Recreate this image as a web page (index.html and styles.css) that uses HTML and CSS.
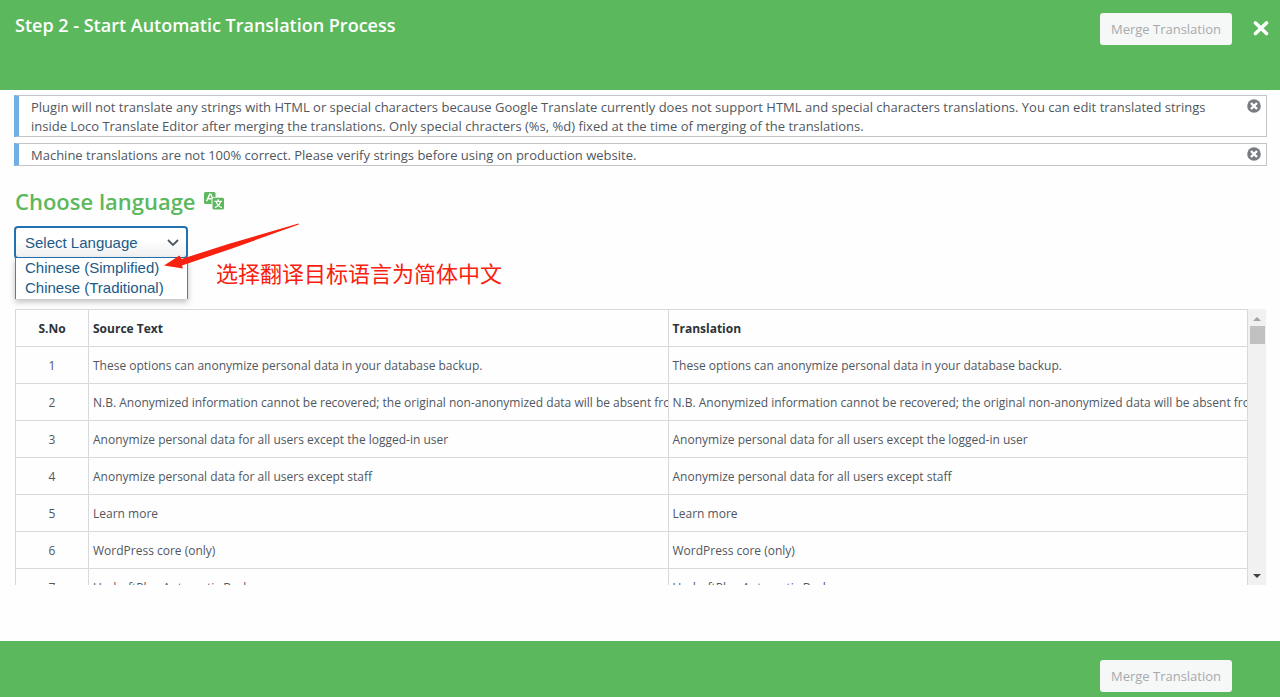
FILE: index.html
```html
<!DOCTYPE html>
<html lang="en">
<head>
  <meta charset="UTF-8">
  <meta name="viewport" content="width=device-width, initial-scale=1.0">
  <title>Start Automatic Translation Process</title>
  <link rel="stylesheet" href="styles.css">
</head>
<body>
  <div class="modal">
    <header class="modal-header">
      <h2 class="modal-title">Step 2 - Start Automatic Translation Process</h2>
      <div class="header-actions">
        <button class="merge-btn" type="button" disabled>Merge Translation</button>
        <button class="close-btn" type="button" aria-label="Close">
          <svg width="16" height="16" viewBox="0 0 16 16"><path d="M2.5 2L13.5 12.500M13.5 2L2.5 12.500" stroke="#fff" stroke-width="3.6" stroke-linecap="round"/></svg>
        </button>
      </div>
    </header>

    <main class="modal-body">
      <!-- Notices -->
      <div class="notice">
        <p>Plugin will not translate any strings with HTML or special characters because Google Translate currently does not support HTML and special characters translations. You can edit translated strings inside Loco Translate Editor after merging the translations. Only special chracters (%s, %d) fixed at the time of merging of the translations.</p>
        <button class="dismiss" type="button" aria-label="Dismiss">
          <svg width="14" height="14" viewBox="0 0 14 14"><circle cx="7" cy="7" r="6.800" fill="#787c82"/><path d="M4 4L10 10M10 4L4 10" stroke="#fff" stroke-width="2.4"/></svg>
        </button>
      </div>
      <div class="notice">
        <p>Machine translations are not 100% correct. Please verify strings before using on production website.</p>
        <button class="dismiss" type="button" aria-label="Dismiss">
          <svg width="14" height="14" viewBox="0 0 14 14"><circle cx="7" cy="7" r="6.800" fill="#787c82"/><path d="M4 4L10 10M10 4L4 10" stroke="#fff" stroke-width="2.4"/></svg>
        </button>
      </div>

      <!-- Language picker -->
      <h3 class="choose-title">
        <label for="language">Choose language</label>
        <svg width="20" height="18" viewBox="0 0 20 18">
          <path d="M1.5 0H10a1.5 1.5 0 0 1 1.5 1.5V5H9.5A2 2 0 0 0 7.500 7v5H1.500A1.500 1.500 0 0 1 0 10.500v-9A1.500 1.500 0 0 1 1.500 0z" fill="#5cb85c"/>
          <path d="M2.600 9.300L5.700 2.200h1.200l1.300 3.600M4 6.700h3.500" fill="none" stroke="#fff" stroke-width="1.500"/>
          <rect x="8.500" y="5.800" width="11.500" height="11.700" rx="1.500" fill="#5cb85c"/>
          <path d="M14.200 7.300v2M10.500 9.400h7.600M16.500 9.600c-.6 2.600-2.600 4.800-5.700 6M12.200 9.600c.8 2.700 2.600 4.800 5.600 6" fill="none" stroke="#fff" stroke-width="1.300"/>
        </svg>
      </h3>
      <div class="picker">
        <select class="language-select" id="language">
          <option>Select Language</option>
        </select>
        <svg class="chevron" width="12" height="8" viewBox="0 0 12 8"><path d="M1 1l5 5 5-5" fill="none" stroke="#50575e" stroke-width="1.800"/></svg>
        <ul class="language-list">
          <li>Chinese (Simplified)</li>
          <li>Chinese (Traditional)</li>
        </ul>
        <svg class="arrow" width="136" height="46" viewBox="0 0 136 46"><path d="M134.500 .5L66 20.500 17.500 36l-2-3.500L0 42.500 19 45.500l-1-3L68 25.500 134.800 1.500z" fill="#f8200f"/></svg>
        <p class="hint">选择翻译目标语言为简体中文</p>
      </div>

      <!-- Strings -->
      <div class="table-wrap">
        <div class="table-scroll">
          <table class="strings">
            <thead>
              <tr><th class="num">S.No</th><th>Source Text</th><th>Translation</th></tr>
            </thead>
            <tbody>
              <tr><td class="num">1</td><td>These options can anonymize personal data in your database backup.</td><td>These options can anonymize personal data in your database backup.</td></tr>
              <tr><td class="num">2</td><td>N.B. Anonymized information cannot be recovered; the original non-anonymized data will be absent from</td><td>N.B. Anonymized information cannot be recovered; the original non-anonymized data will be absent from</td></tr>
              <tr><td class="num">3</td><td>Anonymize personal data for all users except the logged-in user</td><td>Anonymize personal data for all users except the logged-in user</td></tr>
              <tr><td class="num">4</td><td>Anonymize personal data for all users except staff</td><td>Anonymize personal data for all users except staff</td></tr>
              <tr><td class="num">5</td><td>Learn more</td><td>Learn more</td></tr>
              <tr><td class="num">6</td><td>WordPress core (only)</td><td>WordPress core (only)</td></tr>
              <tr><td class="num">7</td><td>UpdraftPlus Automatic Backups</td><td>UpdraftPlus Automatic Backups</td></tr>
            </tbody>
          </table>
        </div>
        <div class="scrollbar">
          <svg width="8" height="4" viewBox="0 0 8 4"><path d="M0 4L4 0l4 4z" fill="#a3a3a3"/></svg>
          <div class="thumb"></div>
          <svg width="8" height="4" viewBox="0 0 8 4"><path d="M0 0L4 4l4-4z" fill="#404040"/></svg>
        </div>
      </div>
    </main>

    <footer class="modal-footer">
      <button class="merge-btn" type="button" disabled>Merge Translation</button>
    </footer>
  </div>
</body>
</html>
```
FILE: styles.css
```css
* {
  box-sizing: border-box;
}

body {
  margin: 0;
  font-family: "Open Sans", "Noto Sans", sans-serif;
  font-size: 13px;
  color: #50575e;
  background: #fefefe;
}

h2, h3, p, ul {
  margin: 0;
  padding: 0;
}

button {
  font-family: inherit;
  border: none;
  padding: 0;
}

svg {
  display: block;
  flex: none;
}

.modal {
  display: flex;
  flex-direction: column;
  height: 100vh;
}

/* Header and footer */
.modal-header {
  display: flex;
  justify-content: space-between;
  align-items: flex-start;
  flex: none;
  height: 90px;
  padding: 13px 11px 0 15px;
  background: #5cb85c;
}

.modal-title {
  font-size: 18px;
  font-weight: 600;
  line-height: 24px;
  color: #fff;
}

.header-actions {
  display: flex;
  align-items: center;
  gap: 21px;
}

.merge-btn {
  width: 132px;
  height: 32px;
  border-radius: 3px;
  background: #f6f7f7;
  color: #a7aaad;
  font-size: 13px;
}

.close-btn {
  background: none;
}

.modal-footer {
  display: flex;
  justify-content: flex-end;
  align-items: center;
  flex: none;
  height: 56px;
  padding: 14px 48px 0 0;
  background: #5cb85c;
}

.modal-body {
  display: flex;
  flex-direction: column;
  flex: 1;
  min-height: 0;
  padding: 5px 13px 56px 14px;
}

/* Notices */
.notice {
  display: flex;
  justify-content: space-between;
  align-items: flex-start;
  margin-bottom: 6px;
  padding: 2px 5px 0 12px;
  border: 1px solid #c3c4c7;
  border-left: 5px solid #72aee6;
  background: #fff;
}

.notice p {
  line-height: 19px;
  max-width: 1190px;
}

.dismiss {
  margin-top: 1px;
  background: none;
}

/* Language picker */
.choose-title {
  display: flex;
  align-items: center;
  gap: 8px;
  margin: 13px 0 9px 1px;
  font-size: 22px;
  font-weight: 600;
  line-height: 32px;
  color: #5cb85c;
}

.picker {
  position: relative;
  flex: none;
  width: 174px;
  height: 33px;
  margin-bottom: 50px;
  font-family: "Liberation Sans", Arial, sans-serif;
}

.language-select {
  appearance: none;
  width: 100%;
  height: 100%;
  padding: 0 9px;
  border: 2px solid #2271b1;
  border-radius: 4px;
  background: linear-gradient(#fff 40%, #f0f0f0);
  color: #205a86;
  font-family: inherit;
  font-size: 15px;
}

.chevron {
  position: absolute;
  top: 13px;
  right: 9px;
}

.language-list {
  position: absolute;
  top: 32px;
  left: 1px;
  width: 173px;
  padding: 0 8px 1px 9px;
  list-style: none;
  border: 1px solid #767676;
  border-width: 0 1px;
  background: #fff;
  box-shadow: 0 3px 6px rgba(0, 0, 0, 0.25);
  color: #205a86;
  font-size: 15px;
  line-height: 20px;
}

.arrow {
  position: absolute;
  top: -3px;
  left: 150px;
}

.hint {
  position: absolute;
  top: 30px;
  left: 202px;
  font-family: "Noto Sans CJK SC", sans-serif;
  font-size: 22px;
  line-height: 32px;
  color: #f8200f;
  white-space: nowrap;
}

/* Strings table */
.table-wrap {
  display: flex;
  flex: 1;
  min-height: 0;
  margin-left: 1px;
}

.table-scroll {
  flex: 1;
  min-width: 0;
  overflow: hidden;
}

.strings {
  width: 100%;
  table-layout: fixed;
  border-collapse: collapse;
  font-size: 12px;
}

.strings th,
.strings td {
  height: 37px;
  padding: 0 4px;
  border: 1px solid #d8d9da;
  text-align: left;
  white-space: nowrap;
  overflow: hidden;
}

.strings th {
  font-weight: 700;
  color: #2c3338;
}

.strings .num {
  width: 73px;
  text-align: center;
}

.scrollbar {
  display: flex;
  flex-direction: column;
  align-items: center;
  flex: none;
  width: 18px;
  margin-right: 1px;
  padding: 8px 0 7px;
  background: #f1f1f1;
}

.thumb {
  width: 15px;
  height: 18px;
  margin: 5px 0 auto;
  background: #c1c1c1;
}
```
